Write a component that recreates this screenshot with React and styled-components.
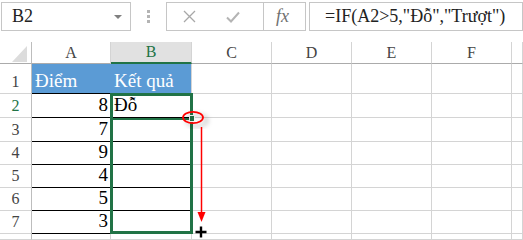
import React from "react";
import styled, { createGlobalStyle } from "styled-components";

const GREEN = "#217346";
const GRID = "#d4d4d4";

const GlobalStyle = createGlobalStyle`
  html, body {
    margin: 0;
    padding: 0;
    background: #fff;
  }
  body {
    font-family: "Liberation Serif", "Times New Roman", serif;
  }
  * {
    box-sizing: border-box;
  }
`;

const Page = styled.div`
  width: 523px;
  height: 240px;
  overflow: hidden;
  background: #fff;
`;

const FormulaBar = styled.div`
  display: flex;
  align-items: stretch;
  height: 31px;
  padding: 2px 0 0 1px;
`;

const NameBox = styled.div`
  width: 130px;
  border: 1px solid #c6c6c6;
  display: flex;
  align-items: center;
  justify-content: space-between;
  padding: 0 8px 0 10px;
  font-size: 18px;
  color: #222;
`;

const Caret = styled.span`
  width: 0;
  height: 0;
  border-left: 4px solid transparent;
  border-right: 4px solid transparent;
  border-top: 4px solid #808080;
`;

const Grip = styled.div`
  width: 35px;
  display: flex;
  flex-direction: column;
  align-items: center;
  justify-content: center;
  gap: 2px;
`;

const Dot = styled.span`
  width: 3px;
  height: 3px;
  background: #b4b4b4;
`;

const ButtonBox = styled.div`
  width: 98px;
  border: 1px solid #c6c6c6;
  display: flex;
`;

const IconSlot = styled.div`
  width: 44px;
  display: flex;
  align-items: center;
  justify-content: center;
`;

const FxBox = styled.div`
  width: 43px;
  margin-left: -1px;
  border: 1px solid #c6c6c6;
  display: flex;
  align-items: center;
  justify-content: center;
  padding-right: 4px;
  font-style: italic;
  font-size: 18px;
  color: #707070;
`;

const FormulaInput = styled.div`
  width: 214px;
  margin-left: 3px;
  border: 1px solid #c6c6c6;
  display: flex;
  align-items: center;
  padding-left: 15px;
  font-size: 18px;
  color: #222;
  white-space: nowrap;
`;

const Sheet = styled.div`
  position: relative;
  margin-top: 11px;
`;

const Grid = styled.div`
  display: grid;
  grid-template-columns: 32px 79px 81px 80px 80px 80px 80px 11px;
  grid-template-rows: 22px 30px 24px 24px 23px 23px 23px 23px 6px;
`;

const Corner = styled.div`
  border-right: 1px solid #bdbdbd;
  border-bottom: 1px solid #ababab;
  display: flex;
  align-items: flex-end;
  justify-content: flex-end;
  padding: 0 4px 1px 0;
`;

const ColHeader = styled.div`
  display: flex;
  align-items: flex-end;
  justify-content: center;
  padding-bottom: 2px;
  font-size: 16px;
  line-height: 1;
  background: ${(p) => (p.$active ? "#e1e1e1" : "#fff")};
  color: ${(p) => (p.$active ? GREEN : "#444")};
  border-right: 1px solid ${GRID};
  border-bottom: ${(p) => (p.$active ? `2px solid ${GREEN}` : "1px solid #ababab")};
`;

const RowHeader = styled.div`
  display: flex;
  align-items: flex-end;
  justify-content: center;
  padding-bottom: 3px;
  font-size: 16px;
  line-height: 1;
  background: #fff;
  color: ${(p) => (p.$active ? GREEN : "#444")};
  border-right: 1px solid #bdbdbd;
  border-bottom: 1px solid ${GRID};
`;

const Cell = styled.div`
  display: flex;
  align-items: flex-end;
  justify-content: ${(p) => (p.$align === "right" ? "flex-end" : "flex-start")};
  padding: 0 2px 3px 3px;
  font-size: 19px;
  line-height: 1;
  white-space: nowrap;
  background: ${(p) => p.$fill || "#fff"};
  color: ${(p) => p.$color || "#000"};
  border-right: 1px solid ${(p) => p.$right || GRID};
  border-bottom: 1px solid ${(p) => p.$bottom || GRID};
`;

const Selection = styled.div`
  position: absolute;
  left: 110px;
  top: 51px;
  width: 83px;
  height: 141px;
  border: 3px solid ${GREEN};
  pointer-events: none;
`;

const ActiveEdge = styled.div`
  position: absolute;
  left: 110px;
  top: 76px;
  width: 82px;
  height: 2px;
  background: ${GREEN};
`;

const FillHandle = styled.div`
  position: absolute;
  left: 189px;
  top: 73px;
  width: 6px;
  height: 7px;
  background: ${GREEN};
  border: 1px solid #fff;
`;

const Marks = styled.svg`
  position: absolute;
  left: 0;
  top: 0;
  pointer-events: none;
`;

const columns = ["A", "B", "C", "D", "E", "F", ""];

const rows = [
  { n: 1, a: "Điểm", b: "Kết quả", head: true },
  { n: 2, a: "8", b: "Đỗ" },
  { n: 3, a: "7" },
  { n: 4, a: "9" },
  { n: 5, a: "4" },
  { n: 6, a: "5" },
  { n: 7, a: "3" },
  { n: "", blank: true },
];

function DataRow({ row }) {
  const blue = "#5b9bd5";
  const cells = [];
  if (row.head) {
    cells.push(
      <Cell key="a" $fill={blue} $color="#fff" $right={blue} $bottom="#000">
        {row.a}
      </Cell>,
      <Cell key="b" $fill={blue} $color="#fff" $bottom="#000">
        {row.b}
      </Cell>
    );
  } else if (row.blank) {
    cells.push(<Cell key="a" />, <Cell key="b" />);
  } else {
    cells.push(
      <Cell key="a" $align="right" $right="#000" $bottom="#000">
        {row.a}
      </Cell>,
      <Cell key="b" $bottom="#000">
        {row.b}
      </Cell>
    );
  }
  for (let i = 0; i < 5; i++) cells.push(<Cell key={"x" + i} />);
  return (
    <>
      <RowHeader $active={row.n === 2}>{row.n}</RowHeader>
      {cells}
    </>
  );
}

export default function App() {
  return (
    <Page>
      <GlobalStyle />
      <FormulaBar>
        <NameBox>
          <span>B2</span>
          <Caret />
        </NameBox>
        <Grip>
          <Dot />
          <Dot />
          <Dot />
        </Grip>
        <ButtonBox>
          <IconSlot>
            <svg width="13" height="13" viewBox="0 0 13 13">
              <path d="M1 1 L12 12 M12 1 L1 12" stroke="#a8a8a8" strokeWidth="1.3" fill="none" />
            </svg>
          </IconSlot>
          <IconSlot>
            <svg width="14" height="12" viewBox="0 0 14 12">
              <path d="M1 6.5 L5 10.5 L13 1.5" stroke="#b4b4b4" strokeWidth="2" fill="none" />
            </svg>
          </IconSlot>
        </ButtonBox>
        <FxBox>fx</FxBox>
        <FormulaInput>=IF(A2&gt;5,"Đỗ","Trượt")</FormulaInput>
      </FormulaBar>

      <Sheet>
        <Grid>
          <Corner>
            <svg width="15" height="16" viewBox="0 0 15 16">
              <polygon points="15,0 15,16 0,16" fill="#dcdcdc" />
            </svg>
          </Corner>
          {columns.map((c, i) => (
            <ColHeader key={i} $active={c === "B"}>
              {c}
            </ColHeader>
          ))}
          {rows.map((r, i) => (
            <DataRow key={i} row={r} />
          ))}
        </Grid>

        <Selection />
        <ActiveEdge />
        <FillHandle />

        <Marks width="523" height="198" viewBox="0 42 523 198">
          <defs>
            <filter id="soft" x="-50%" y="-50%" width="200%" height="200%">
              <feDropShadow dx="4" dy="3" stdDeviation="2.5" floodColor="#000" floodOpacity="0.35" />
            </filter>
          </defs>
          <ellipse cx="193" cy="117.5" rx="10" ry="5.6" fill="none" stroke="#ff0000" strokeWidth="1.8" filter="url(#soft)" />
          <line x1="201.5" y1="127" x2="201.5" y2="213" stroke="#ff0000" strokeWidth="1.5" />
          <polygon points="197.5,212 205.5,212 201.5,222" fill="#ff0000" />
          <path d="M195.5 232 H206.5 M201 226.5 V237.5" stroke="#000" strokeWidth="2.4" />
        </Marks>
      </Sheet>
    </Page>
  );
}
